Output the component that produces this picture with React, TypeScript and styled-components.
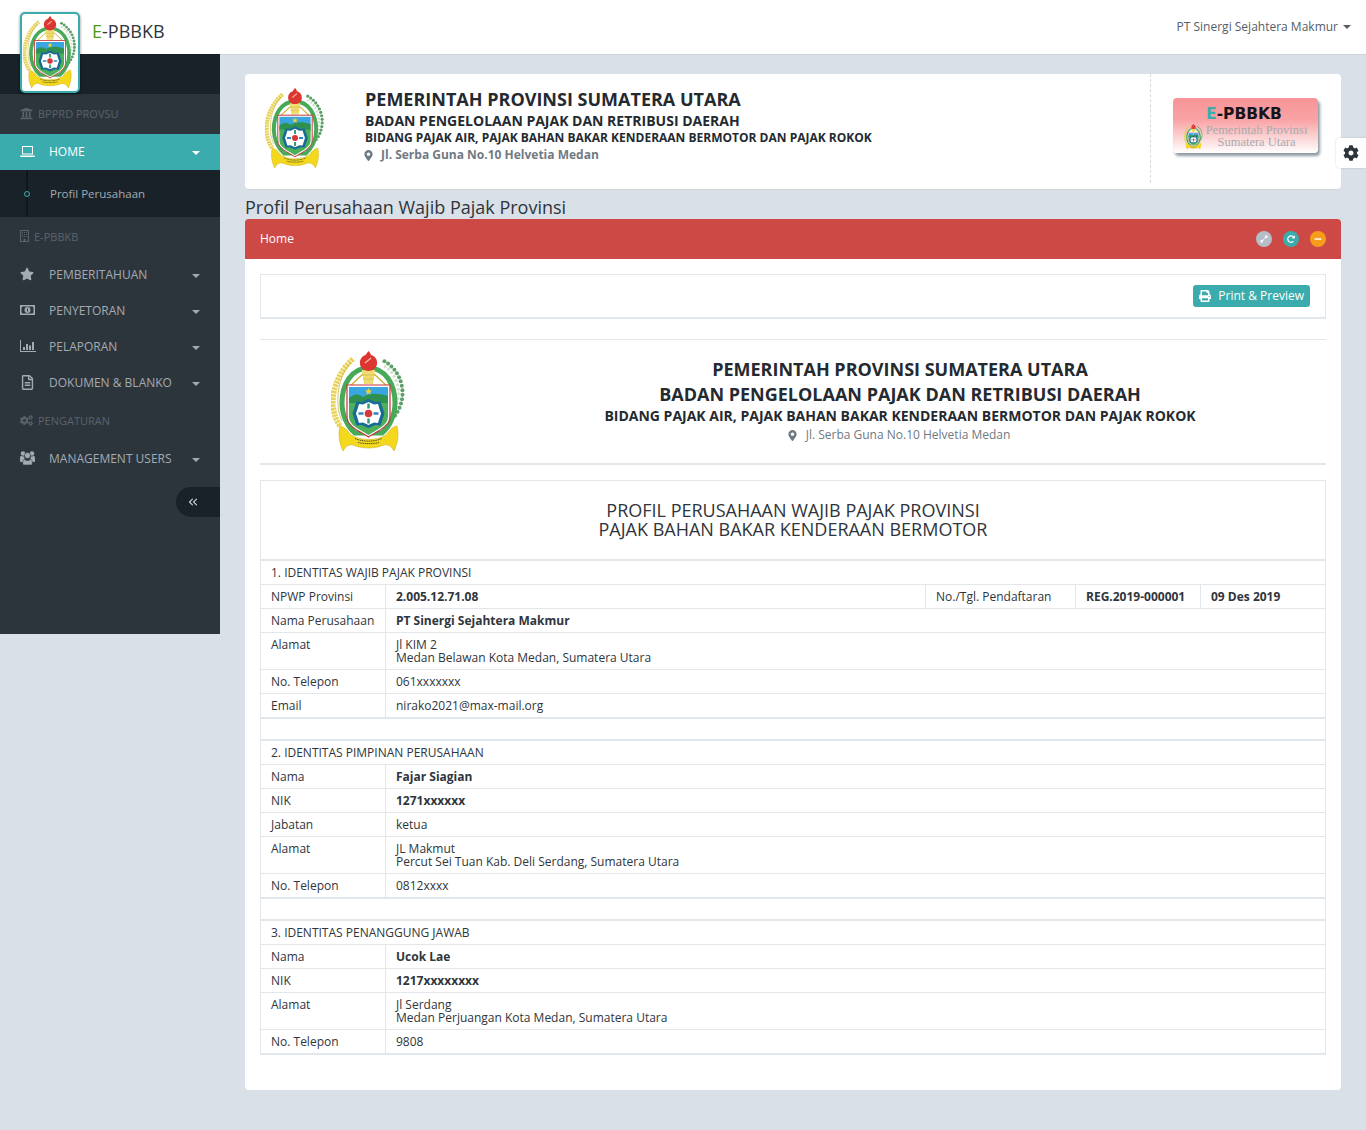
import React from "react";
import styled, { createGlobalStyle } from "styled-components";
import { ChevronsLeft } from "lucide-react";
import {
  FaUniversity,
  FaStar,
  FaRegFileAlt,
  FaCogs,
  FaCog,
  FaPrint,
  FaMapMarkerAlt,
  FaExpandAlt,
  FaRedoAlt,
  FaMinus,
} from "react-icons/fa";

const GlobalStyle = createGlobalStyle`
  html, body {
    margin: 0;
    padding: 0;
    background: #d9e0e7;
    font-family: "Open Sans", "Liberation Sans", sans-serif;
    font-size: 12px;
    color: #2b3036;
  }
  * { box-sizing: border-box; }
`;

// titik kapas di sisi kanan lambang
function cottonDots(rx: number, ry: number, from: number, count: number) {
  const dots = [];
  for (let i = 0; i < count; i++) {
    const t = ((from + (i * 115) / count) * Math.PI) / 180;
    dots.push({ x: 37.5 + rx * Math.sin(t), y: 42 - ry * Math.cos(t) });
  }
  return dots;
}

// lambang provinsi, digambar ulang
function Crest({ width }: { width: number }) {
  return (
    <svg width={width} viewBox="0 0 75 102" style={{ display: "block" }}>
      {/* padi */}
      <path d="M22 8C8 20 1 38 2 55c1 8 3 14 7 20" fill="none" stroke="#e8d35a" strokeWidth="5.500" strokeDasharray="2.600 .8" />
      <path d="M20 11C10 22 6 38 7 54c0 6 2 11 4 16" fill="none" stroke="#c6ad2c" strokeWidth=".7" />
      {/* kapas */}
      {cottonDots(34, 36, 28, 16).map((d, i) => (
        <circle key={i} cx={d.x} cy={d.y} r="2" fill="#5c9f68" />
      ))}
      {cottonDots(30, 32, 34, 14).map((d, i) => (
        <circle key={i} cx={d.x} cy={d.y} r="1.500" fill="#cfe3c8" />
      ))}
      {/* lingkar hijau */}
      <path d="M37.500 17C20 17 11 34 11 52c0 13 6 24 13 30h27c7-6 13-17 13-30 0-18-9-35-26.500-35z" fill="#fff" stroke="#47aa58" strokeWidth="5" />
      {/* obor dan tali */}
      <path d="M33 22 17 37M42 22l16 15" stroke="#cfae28" strokeWidth="1.300" fill="none" />
      <path d="M31 19h13l-2 14h-9z" fill="#efdc72" />
      <path d="M31 24h13M32 28h11" stroke="#d8bd3c" strokeWidth=".8" />
      <path d="M37.500 0c1 1 2 2 2.500 4 4 1 6.500 4.500 6 9-.5 4-4 7-8.500 7S29.500 17 29 13c-.5-4.500 2-8 5.500-9 1-1 2-3 3-4z" fill="#dd3530" />
      <path d="M34 12l6-5" stroke="#f4b6aa" strokeWidth="1.500" />
      {/* perisai */}
      <path d="M16 34h43v32c0 9-12 14-21.500 20C28 80 16 75 16 66z" fill="#fff" stroke="#c6343a" strokeWidth="1.200" />
      <path d="M18 36h39v16H18z" fill="#3aa6df" />
      <path d="M18 47c6-5 10-4 14-1 7-4 14-4 25-1v9H18z" fill="#2f9150" />
      <path d="M18 52h39v14c0 8-10 12-19.500 18C28 78 18 74 18 66z" fill="#4caf5a" />
      <path d="M37.500 37l1 2.300 2.500.2-1.900 1.600.6 2.400-2.200-1.300-2.200 1.300.6-2.400-1.900-1.600 2.500-.2z" fill="#f2d22e" />
      {/* lambang tengah */}
      <path d="M37.500 48l7 3 5-.500 2 6 2 6-2 6-2 6-5-.500-7 3-7-3-5 .500-2-6-2-6 2-6 2-6 5 .500z" fill="#1a6a97" />
      <path d="M37.500 51l5.500 2.500 4-.5 1.500 5 1.500 4.500-1.500 4.500-1.500 5-4-.5-5.500 2.500-5.500-2.500-4 .5-1.500-5-1.500-4.500 1.500-4.500 1.500-5 4 .5z" fill="#fff" />
      <circle cx="37.500" cy="62.500" r="3.800" fill="#d7363a" />
      <path d="M37.500 52.500v5M37.500 67.500v5" stroke="#2b9c74" strokeWidth="2.400" />
      <path d="M27.500 62.500h5M42.500 62.500h5" stroke="#2f86c0" strokeWidth="2.400" />
      {/* pita */}
      <path d="M9 75c5 1 8 5 11 9 10 6 25 6 35 0 3-4 6-8 11-9 2 7 1 17-3 25-3-5-6-7-10-6-9 4-22 4-31 0-4-1-7 1-10 6-4-8-5-18-3-25z" fill="#f3d81e" stroke="#c9a914" strokeWidth=".5" />
      <path d="M24 87.500c8 3.500 19 3.500 27 0M27 91.500c6 1.500 15 1.500 21 0" stroke="#4c4a26" strokeWidth="1" fill="none" strokeDasharray="1.200 .6" />
    </svg>
  );
}

function LaptopIcon() {
  return (
    <svg width="15" height="11" viewBox="0 0 15 11" fill="currentColor">
      <path fillRule="evenodd" d="M2 0h11v8.500H2zM3 1v6.500h9V1zM0 9.500h15c0 .8-.5 1.500-1.300 1.500H1.300C.5 11 0 10.300 0 9.500z" />
    </svg>
  );
}

function MoneyIcon() {
  return (
    <svg width="15" height="10" viewBox="0 0 15 10" fill="currentColor">
      <path fillRule="evenodd" d="M0 0h15v10H0zM2.500 1.500 1.500 2.500v5l1 1h10l1-1v-5l-1-1zM7.500 2a3 3 0 1 1 0 6 3 3 0 0 1 0-6z" />
      <path d="M7 3.500h1v3H7z" fill="#2d353c" />
    </svg>
  );
}

function BarChartIcon() {
  return (
    <svg width="16" height="12" viewBox="0 0 16 12" fill="currentColor">
      <path d="M0 0h1v11h15v1H0zM3 7h2v3H3zM6 4h2v6H6zM9 5.500h2V10H9zM12 2h2v8h-2z" />
    </svg>
  );
}

function BuildingIcon() {
  return (
    <svg width="9" height="12" viewBox="0 0 9 12" fill="currentColor">
      <path fillRule="evenodd" d="M0 0h9v12H0zM1 1v10h2.500V9h2v2H8V1z" />
      <path d="M2 2h1v1H2zM4 2h1v1H4zM6 2h1v1H6zM2 4h1v1H2zM4 4h1v1H4zM6 4h1v1H6zM2 6h1v1H2zM4 6h1v1H4zM6 6h1v1H6z" />
    </svg>
  );
}

function UsersIcon() {
  return (
    <svg width="15" height="14" viewBox="0 0 15 14" fill="currentColor">
      <circle cx="3" cy="2.500" r="2.300" />
      <circle cx="12" cy="2.500" r="2.300" />
      <path d="M0 6.500c0-1 .6-1.500 1.500-1.500.8.500 2 .6 2.700.3-.2 1.500.3 2.500 1 3.200-1 .4-1.800 1.300-2 2.500H1c-.6 0-1-.5-1-1zM15 6.500c0-1-.6-1.500-1.500-1.500-.8.500-2 .6-2.700.3.200 1.500-.3 2.500-1 3.200 1 .4 1.800 1.300 2 2.500H14c.6 0 1-.5 1-1z" />
      <circle cx="7.500" cy="4.500" r="3" stroke="#2d353c" strokeWidth=".6" />
      <path d="M4.500 8.500c1.600 1.200 4.400 1.200 6 0 1.200.2 1.800 1.200 1.800 2.500v1.500c0 1-.6 1.500-1.500 1.500H4.200c-.9 0-1.500-.5-1.500-1.500V11c0-1.300.6-2.300 1.800-2.500z" stroke="#2d353c" strokeWidth=".6" />
    </svg>
  );
}

const menuItems = [
  { label: "PEMBERITAHUAN", icon: <FaStar size={14} /> },
  { label: "PENYETORAN", icon: <MoneyIcon /> },
  { label: "PELAPORAN", icon: <BarChartIcon /> },
  { label: "DOKUMEN & BLANKO", icon: <FaRegFileAlt size={15} /> },
];

export default function App() {
  return (
    <>
      <GlobalStyle />
      <Navbar>
        <LogoBox>
          <Crest width={54} />
        </LogoBox>
        <Brand>
          <BrandE>E</BrandE>-PBBKB
        </Brand>
        <UserMenu>
          PT Sinergi Sejahtera Makmur <UserCaret />
        </UserMenu>
      </Navbar>

      <Layout>
        <Sidebar>
          <SidebarTop />
          <SectionLabel>
            <FaUniversity size={13} /> BPPRD PROVSU
          </SectionLabel>
          <ActiveItem>
            <MenuIcon>
              <LaptopIcon />
            </MenuIcon>
            <MenuText>HOME</MenuText>
            <Caret />
          </ActiveItem>
          <SubMenu>
            <SubDot />
            Profil Perusahaan
          </SubMenu>
          <SectionLabel>
            <BuildingIcon /> E-PBBKB
          </SectionLabel>
          {menuItems.map((item) => (
            <MenuItem key={item.label}>
              <MenuIcon>{item.icon}</MenuIcon>
              <MenuText>{item.label}</MenuText>
              <Caret />
            </MenuItem>
          ))}
          <SectionLabel>
            <FaCogs size={13} /> PENGATURAN
          </SectionLabel>
          <MenuItem>
            <MenuIcon>
              <UsersIcon />
            </MenuIcon>
            <MenuText>MANAGEMENT USERS</MenuText>
            <Caret />
          </MenuItem>
          <CollapseRow>
            <CollapseButton>
              <ChevronsLeft size={14} strokeWidth={2} />
            </CollapseButton>
          </CollapseRow>
        </Sidebar>

        <Main>
          <HeadCard>
            <HeadCrest>
              <Crest width={60} />
            </HeadCrest>
            <HeadText>
              <HeadTitle>PEMERINTAH PROVINSI SUMATERA UTARA</HeadTitle>
              <HeadSub>BADAN PENGELOLAAN PAJAK DAN RETRIBUSI DAERAH</HeadSub>
              <HeadSmall>BIDANG PAJAK AIR, PAJAK BAHAN BAKAR KENDERAAN BERMOTOR DAN PAJAK ROKOK</HeadSmall>
              <HeadAddress>
                <FaMapMarkerAlt /> Jl. Serba Guna No.10 Helvetia Medan
              </HeadAddress>
            </HeadText>
            <HeadBadgeCol>
              <Badge>
                <BadgeTitle>
                  <BadgeE>E</BadgeE>-PBBKB
                </BadgeTitle>
                <BadgeBottom>
                  <Crest width={19} />
                  <BadgeText>
                    Pemerintah Provinsi
                    <br />
                    Sumatera Utara
                  </BadgeText>
                </BadgeBottom>
              </Badge>
            </HeadBadgeCol>
          </HeadCard>

          <PageTitle>Profil Perusahaan Wajib Pajak Provinsi</PageTitle>

          <PanelHeading>
            <span>Home</span>
            <PanelTools>
              <ToolDot $color="#b6bfc8">
                <FaExpandAlt />
              </ToolDot>
              <ToolDot $color="#3aacad">
                <FaRedoAlt />
              </ToolDot>
              <ToolDot $color="#f59c1a">
                <FaMinus />
              </ToolDot>
            </PanelTools>
          </PanelHeading>

          <PanelBody>
            <PrintBar>
              <PrintButton>
                <FaPrint /> Print &amp; Preview
              </PrintButton>
            </PrintBar>

            <Letterhead>
              <LetterCrest>
                <Crest width={75} />
              </LetterCrest>
              <LetterText>
                <LetterTitle>PEMERINTAH PROVINSI SUMATERA UTARA</LetterTitle>
                <LetterTitle>BADAN PENGELOLAAN PAJAK DAN RETRIBUSI DAERAH</LetterTitle>
                <LetterSub>BIDANG PAJAK AIR, PAJAK BAHAN BAKAR KENDERAAN BERMOTOR DAN PAJAK ROKOK</LetterSub>
                <LetterAddress>
                  <FaMapMarkerAlt /> Jl. Serba Guna No.10 Helvetia Medan
                </LetterAddress>
              </LetterText>
            </Letterhead>

            <ProfileTable>
              <colgroup>
                <col style={{ width: 125 }} />
                <col style={{ width: 540 }} />
                <col style={{ width: 150 }} />
                <col style={{ width: 125 }} />
                <col />
              </colgroup>
              <tbody>
                <tr>
                  <TitleCell colSpan={5}>
                    PROFIL PERUSAHAAN WAJIB PAJAK PROVINSI
                    <br />
                    PAJAK BAHAN BAKAR KENDERAAN BERMOTOR
                  </TitleCell>
                </tr>
                <SectionRow title="1. IDENTITAS WAJIB PAJAK PROVINSI" />
                <tr>
                  <Cell>NPWP Provinsi</Cell>
                  <Cell $bold>2.005.12.71.08</Cell>
                  <Cell>No./Tgl. Pendaftaran</Cell>
                  <Cell $bold>REG.2019-000001</Cell>
                  <Cell $bold>09 Des 2019</Cell>
                </tr>
                <DataRow label="Nama Perusahaan" bold>PT Sinergi Sejahtera Makmur</DataRow>
                <DataRow label="Alamat">
                  Jl KIM 2
                  <br />
                  Medan Belawan Kota Medan, Sumatera Utara
                </DataRow>
                <DataRow label="No. Telepon">061xxxxxxx</DataRow>
                <DataRow label="Email">nirako2021@max-mail.org</DataRow>
                <SpacerRow />
                <SectionRow title="2. IDENTITAS PIMPINAN PERUSAHAAN" />
                <DataRow label="Nama" bold>Fajar Siagian</DataRow>
                <DataRow label="NIK" bold>1271xxxxxx</DataRow>
                <DataRow label="Jabatan">ketua</DataRow>
                <DataRow label="Alamat">
                  JL Makmut
                  <br />
                  Percut Sei Tuan Kab. Deli Serdang, Sumatera Utara
                </DataRow>
                <DataRow label="No. Telepon">0812xxxx</DataRow>
                <SpacerRow />
                <SectionRow title="3. IDENTITAS PENANGGUNG JAWAB" />
                <DataRow label="Nama" bold>Ucok Lae</DataRow>
                <DataRow label="NIK" bold>1217xxxxxxxx</DataRow>
                <DataRow label="Alamat">
                  Jl Serdang
                  <br />
                  Medan Perjuangan Kota Medan, Sumatera Utara
                </DataRow>
                <DataRow label="No. Telepon">9808</DataRow>
              </tbody>
            </ProfileTable>
          </PanelBody>
        </Main>
      </Layout>

      <GearTab>
        <FaCog />
      </GearTab>
    </>
  );
}

function SectionRow({ title }: { title: string }) {
  return (
    <tr>
      <Cell colSpan={5} $thickTop>
        {title}
      </Cell>
    </tr>
  );
}

function SpacerRow() {
  return (
    <tr>
      <SpacerCell colSpan={5} />
    </tr>
  );
}

function DataRow({ label, bold, children }: { label: string; bold?: boolean; children: React.ReactNode }) {
  return (
    <tr>
      <Cell>{label}</Cell>
      <Cell colSpan={4} $bold={bold}>
        {children}
      </Cell>
    </tr>
  );
}

const Navbar = styled.header`
  position: relative;
  height: 54px;
  background: #fff;
  box-shadow: 0 1px 0 #cfd4d9;
  display: flex;
  align-items: center;
  padding: 0 15px 0 92px;
`;

const LogoBox = styled.div`
  position: absolute;
  z-index: 5;
  left: 20px;
  top: 12px;
  width: 60px;
  height: 81px;
  background: #fff;
  border: 2px solid #3aacad;
  border-radius: 5px;
  box-shadow: 0 1px 3px rgba(0, 0, 0, 0.5);
  display: flex;
  align-items: center;
  justify-content: center;
  overflow: hidden;
`;

const Brand = styled.div`
  font-size: 18px;
  color: #2f353b;
  padding-top: 8px;
`;

const BrandE = styled.span`
  color: #4c9a12;
`;

const UserMenu = styled.div`
  margin-left: auto;
  font-size: 12px;
  color: #555d65;
  display: flex;
  align-items: center;
  gap: 5px;
  padding-bottom: 2px;
`;

const UserCaret = styled.i`
  border-top: 4px solid #555d65;
  border-left: 4px solid transparent;
  border-right: 4px solid transparent;
  margin-top: 2px;
`;

const Layout = styled.div`
  display: flex;
  align-items: flex-start;
`;

const Sidebar = styled.aside`
  position: relative;
  width: 220px;
  flex: none;
  height: 580px;
  background: #2d353c;
  color: #a3abb2;
`;

const SidebarTop = styled.div`
  height: 40px;
  background: #1a2229;
`;

const SectionLabel = styled.div`
  height: 40px;
  display: flex;
  align-items: center;
  gap: 5px;
  padding: 0 0 2px 20px;
  font-size: 11px;
  color: #59636c;
`;

const MenuItem = styled.div`
  height: 36px;
  display: flex;
  align-items: center;
  padding: 0 20px 2px 20px;
  font-size: 12px;
  color: #a3abb2;
`;

const ActiveItem = styled(MenuItem)`
  background: #3aacad;
  color: #fff;
`;

const MenuIcon = styled.span`
  width: 29px;
  flex: none;
  display: flex;
  align-items: center;
`;

const MenuText = styled.span`
  flex: 1;
`;

const Caret = styled.i`
  border-top: 4px solid currentColor;
  border-left: 4px solid transparent;
  border-right: 4px solid transparent;
  margin-top: 3px;
`;

const SubMenu = styled.div`
  position: relative;
  height: 47px;
  background: #1a2229;
  display: flex;
  align-items: center;
  padding: 0 0 1px 50px;
  font-size: 11.5px;
  color: #a3abb2;

  &::before {
    content: "";
    position: absolute;
    left: 26px;
    top: 0;
    bottom: 0;
    width: 2px;
    background: #10161b;
  }
`;

const SubDot = styled.i`
  position: absolute;
  z-index: 1;
  left: 24px;
  top: 21px;
  width: 6px;
  height: 6px;
  border: 1px solid #3aacad;
  border-radius: 50%;
  background: #1a2229;
`;

const CollapseRow = styled.div`
  display: flex;
  justify-content: flex-end;
  margin-top: 10px;
`;

const CollapseButton = styled.div`
  width: 44px;
  height: 30px;
  background: #1a2229;
  border-radius: 20px 0 0 20px;
  color: #c8cdd2;
  display: flex;
  align-items: center;
  justify-content: center;
  padding-right: 10px;
`;

const Main = styled.main`
  flex: 1;
  min-width: 0;
  padding: 20px 25px 40px;
`;

const HeadCard = styled.section`
  height: 116px;
  background: #fff;
  border-radius: 4px;
  border-bottom: 1px solid #cfd5da;
  display: flex;
`;

const HeadCrest = styled.div`
  width: 120px;
  flex: none;
  padding: 14px 0 0 20px;
`;

const HeadText = styled.div`
  flex: 1;
  padding-top: 13px;
`;

const HeadTitle = styled.div`
  font-size: 18px;
  line-height: 24px;
  font-weight: 700;
  color: #242a30;
`;

const HeadSub = styled.div`
  font-size: 14px;
  line-height: 18px;
  font-weight: 700;
  color: #242a30;
  margin-top: 1px;
`;

const HeadSmall = styled.div`
  font-size: 12px;
  line-height: 16px;
  font-weight: 700;
  color: #242a30;
`;

const HeadAddress = styled.div`
  font-size: 12px;
  line-height: 18px;
  font-weight: 700;
  color: #6f7a83;
  display: flex;
  align-items: center;
  gap: 7px;

  svg {
    font-size: 11px;
    margin-left: -2px;
  }
`;

const HeadBadgeCol = styled.div`
  width: 191px;
  flex: none;
  border-left: 1px dashed #d5dade;
  margin: 0 0 6px;
  padding: 24px 0 0 22px;
`;

const Badge = styled.div`
  width: 145px;
  height: 55px;
  border-radius: 4px;
  background: linear-gradient(#f79497 0%, #f9a3a5 40%, #fff 100%);
  box-shadow: 2px 3px 3px #8f99a3;
  padding-top: 9px;
`;

const BadgeTitle = styled.div`
  font-family: "DejaVu Sans", sans-serif;
  font-size: 15.5px;
  line-height: 15px;
  font-weight: 700;
  text-align: center;
  color: #17151a;
  padding-right: 3px;
`;

const BadgeE = styled.span`
  color: #3aacad;
`;

const BadgeBottom = styled.div`
  display: flex;
  align-items: flex-start;
  padding-left: 11px;
  margin-top: 2px;
`;

const BadgeText = styled.div`
  flex: 1;
  font-family: "Liberation Serif", serif;
  font-size: 12.5px;
  line-height: 11.500px;
  text-align: center;
  color: #a9a9ae;
  padding: 1px 8px 0 0;
`;

const PageTitle = styled.h1`
  margin: 6px 0 1px;
  font-size: 18px;
  line-height: 22px;
  font-weight: 400;
  color: #2f353b;
`;

const PanelHeading = styled.div`
  height: 40px;
  background: #cc4946;
  border-radius: 4px 4px 0 0;
  color: #fff;
  font-size: 12px;
  display: flex;
  align-items: center;
  justify-content: space-between;
  padding: 0 15px 1px;
`;

const PanelTools = styled.div`
  display: flex;
  gap: 11px;
`;

const ToolDot = styled.span<{ $color: string }>`
  width: 16px;
  height: 16px;
  border-radius: 50%;
  background: ${(p) => p.$color};
  color: #fff;
  display: flex;
  align-items: center;
  justify-content: center;
  font-size: 8px;
`;

const PanelBody = styled.div`
  background: #fff;
  border-radius: 0 0 4px 4px;
  padding: 15px 15px 35px;
`;

const PrintBar = styled.div`
  height: 45px;
  border: 1px solid #e2e7eb;
  border-bottom-width: 2px;
  display: flex;
  align-items: center;
  justify-content: flex-end;
  padding: 0 15px 1px 0;
`;

const PrintButton = styled.div`
  height: 22px;
  background: #3aacad;
  border-radius: 3px;
  color: #fff;
  font-size: 12px;
  display: flex;
  align-items: center;
  gap: 7px;
  padding: 0 6px;
`;

const Letterhead = styled.div`
  margin-top: 20px;
  height: 126px;
  border-top: 1px solid #e2e7eb;
  border-bottom: 2px solid #e2e7eb;
  display: flex;
`;

const LetterCrest = styled.div`
  width: 217px;
  flex: none;
  display: flex;
  justify-content: center;
  align-items: flex-start;
  padding: 11px 0 0;
`;

const LetterText = styled.div`
  flex: 1;
  text-align: center;
  padding: 17px 0 0 58px;
  margin-right: 61px;
`;

const LetterTitle = styled.div`
  font-size: 18px;
  line-height: 25px;
  font-weight: 700;
  color: #242a30;
`;

const LetterSub = styled.div`
  font-size: 14px;
  line-height: 18px;
  font-weight: 700;
  color: #242a30;
`;

const LetterAddress = styled.div`
  margin-top: 1px;
  font-size: 12px;
  line-height: 18px;
  color: #6f7a83;
  display: flex;
  align-items: center;
  justify-content: center;
  gap: 8px;
  padding-right: 3px;

  svg {
    font-size: 11px;
  }
`;

const ProfileTable = styled.table`
  width: 100%;
  margin-top: 15px;
  table-layout: fixed;
  border-collapse: collapse;
  border: 1px solid #e2e7eb;
  border-bottom-width: 2px;
  color: #2f353b;
`;

const TitleCell = styled.td`
  height: 79px;
  padding: 0;
  text-align: center;
  font-size: 18px;
  line-height: 19px;
  color: #2f353b;
`;

const Cell = styled.td<{ $bold?: boolean; $thickTop?: boolean }>`
  padding: 5px 10px;
  font-size: 12px;
  line-height: 13px;
  vertical-align: top;
  border: 1px solid #e2e7eb;
  border-top-width: ${(p) => (p.$thickTop ? 2 : 1)}px;
  font-weight: ${(p) => (p.$bold ? 700 : 400)};
`;

const SpacerCell = styled.td`
  height: 22px;
  border: 1px solid #e2e7eb;
  border-top-width: 2px;
`;

const GearTab = styled.div`
  position: absolute;
  right: 0;
  top: 138px;
  width: 30px;
  height: 30px;
  background: #fff;
  border-radius: 4px 0 0 4px;
  box-shadow: 0 0 2px rgba(0, 0, 0, 0.2);
  display: flex;
  align-items: center;
  justify-content: center;
  font-size: 16px;
  color: #2d353c;
`;
